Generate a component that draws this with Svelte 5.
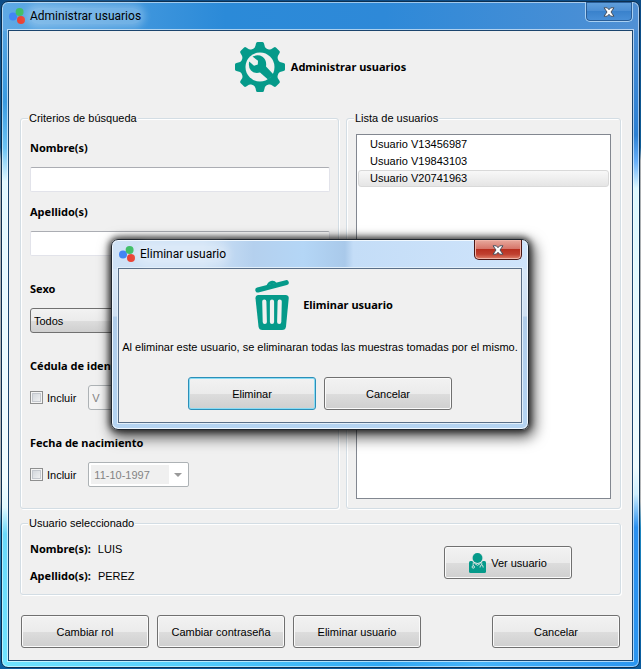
<script>
  const users = ['Usuario V13456987', 'Usuario V19843103', 'Usuario V20741963'];
  let selected = $state(2);
  let nombre = $state('');
  let apellido = $state('');
</script>

{#snippet logo()}
  <svg class="logo" viewBox="0 0 16 16" aria-hidden="true">
    <circle cx="4" cy="8.6" r="4" fill="#4285f4" />
    <circle cx="10.6" cy="4" r="4" fill="#41bf68" />
    <circle cx="12" cy="12" r="4" fill="#ea4335" />
  </svg>
{/snippet}

{#snippet cross()}
  <svg class="cross" viewBox="0 0 12 10" aria-hidden="true">
    <path d="M1 .8h3.3L6 2.7 7.700 .8H11L8 5l3 4.200H7.700L6 7.300 4.300 9.200H1L4 5z" fill="#fff" stroke="#46505f" stroke-width="1" stroke-linejoin="round" />
  </svg>
{/snippet}

<div class="desktop">
  <main class="window">
    <header class="titlebar">
      {@render logo()}
      <span class="caption">Administrar usuarios</span>
      <button class="close" aria-label="Cerrar">{@render cross()}</button>
    </header>

    <div class="client">
      <div class="heading">
        <svg width="50" height="50" viewBox="0 0 50 50" aria-hidden="true">
          <g fill="#059a8a">
            <circle cx="25" cy="25" r="19.500" />
            {#each [0, 45, 90, 135, 180, 225, 270, 315] as angle}
              <path d="M18 7.500Q20.600 5.500 21 1.500Q21.200 0 22.500 0H27.500Q28.800 0 29 1.500Q29.400 5.500 32 7.500z" transform="rotate({angle} 25 25)" />
            {/each}
          </g>
          <circle cx="25" cy="25" r="14.500" fill="#f0f0f0" />
          <path d="M17.500 14.600Q23 12 27.500 14.800Q32 18 31 24.500L38.500 32.500L33 37.500L25 30.500Q19.500 32 16 28.500Q13 25 14.200 19.500L19 23.800L22.800 22.600L23 18.800z" fill="#059a8a" />
        </svg>
        <h1>Administrar usuarios</h1>
      </div>

      <div class="columns">
        <fieldset class="criteria">
          <legend>Criterios de búsqueda</legend>
          <div class="field near">
            <label class="name" for="nombre">Nombre(s)</label>
            <input id="nombre" class="text" type="text" bind:value={nombre} />
          </div>
          <div class="field">
            <label class="name" for="apellido">Apellido(s)</label>
            <input id="apellido" class="text" type="text" bind:value={apellido} />
          </div>
          <div class="field">
            <label class="name" for="sexo">Sexo</label>
            <select id="sexo" class="combo">
              <option>Todos</option>
              <option>Femenino</option>
              <option>Masculino</option>
            </select>
          </div>
          <div class="field">
            <span class="name">Cédula de identidad</span>
            <div class="row">
              <label class="check"><input type="checkbox" />Incluir</label>
              <select class="kind" aria-label="Tipo de cédula" disabled>
                <option>V</option>
                <option>E</option>
              </select>
            </div>
          </div>
          <div class="field">
            <span class="name">Fecha de nacimiento</span>
            <div class="row">
              <label class="check"><input type="checkbox" />Incluir</label>
              <div class="date">
                <input type="text" value="11-10-1997" aria-label="Fecha de nacimiento" disabled />
                <button aria-label="Abrir calendario" disabled>
                  <svg width="8" height="4" viewBox="0 0 8 4"><path d="M0 0h8L4 4z" fill="#9a9a9a" /></svg>
                </button>
              </div>
            </div>
          </div>
        </fieldset>

        <fieldset class="users">
          <legend>Lista de usuarios</legend>
          <div class="list" role="listbox" aria-label="Lista de usuarios">
            {#each users as user, i}
              <button class="item" class:selected={i === selected} role="option" aria-selected={i === selected} onclick={() => (selected = i)}>{user}</button>
            {/each}
          </div>
        </fieldset>
      </div>

      <fieldset class="current">
        <legend>Usuario seleccionado</legend>
        <dl>
          <div><dt>Nombre(s):</dt><dd>LUIS</dd></div>
          <div><dt>Apellido(s):</dt><dd>PEREZ</dd></div>
        </dl>
        <button class="push">
          <svg width="17" height="20" viewBox="0 0 17 20" aria-hidden="true">
            <path d="M1.500 8H15.500Q17 8 17 9.500V18.500Q17 20 15.500 20H1.500Q0 20 0 18.500V9.500Q0 8 1.500 8z" fill="#059a8a" />
            <circle cx="8.500" cy="5.200" r="5.900" fill="#e6e6e6" />
            <circle cx="8.500" cy="5" r="4.900" fill="#059a8a" />
            <path d="M4.300 9.500Q4 12 4.300 13M12.700 9.500Q13 11 12.600 12M11 14.500Q11 12 12.600 12T14.200 14.500M5.500 10.500l3 1.800 3-1.800" fill="none" stroke="#e6e6e6" stroke-width="0.900" />
            <circle cx="4.300" cy="14" r="1.200" fill="none" stroke="#e6e6e6" stroke-width="0.900" />
          </svg>
          Ver usuario
        </button>
      </fieldset>

      <footer>
        <button class="push">Cambiar rol</button>
        <button class="push">Cambiar contraseña</button>
        <button class="push">Eliminar usuario</button>
        <button class="push last">Cancelar</button>
      </footer>
    </div>
  </main>

  <div class="dialog" role="dialog" aria-modal="true" aria-labelledby="dialog-title">
    <header class="titlebar">
      {@render logo()}
      <span class="caption">Eliminar usuario</span>
      <button class="close red" aria-label="Cerrar">{@render cross()}</button>
    </header>
    <div class="body">
      <div class="heading wide">
        <svg width="34" height="50" viewBox="0 0 34 50" aria-hidden="true">
          <g fill="#059a8a">
            <path d="M2.800 10L31.300 2.600" stroke="#059a8a" stroke-width="5" stroke-linecap="round" />
            <path d="M11.500 5.500Q13 1.500 17 .8Q20 .5 21.500 3z" />
            <path d="M3.500 15H30.500Q34 15 33.700 18.500L31 46.500Q30.600 50 27 50H7.500Q4 50 3.500 46.500L.5 18.500Q.3 15 3.500 15z" />
          </g>
          <path d="M9.300 21.500L9.800 42M17 21.500V42M24.700 21.500L24.200 42" stroke="#f0f0f0" stroke-width="4.200" stroke-linecap="round" />
        </svg>
        <h2 id="dialog-title">Eliminar usuario</h2>
      </div>
      <p>Al eliminar este usuario, se eliminaran todas las muestras tomadas por el mismo.</p>
      <div class="actions">
        <button class="push default">Eliminar</button>
        <button class="push">Cancelar</button>
      </div>
    </div>
  </div>
</div>

<style>
  :global(body) {
    margin: 0;
  }

  .desktop,
  .desktop :is(button, input, select) {
    box-sizing: border-box;
    font-family: 'Liberation Sans', Arial, sans-serif;
    font-size: 11px;
    line-height: 16px;
    color: #000;
  }

  .desktop {
    position: relative;
    display: flex;
    min-height: 100vh;
    padding: 1px;
    background: linear-gradient(#0d4c86, #0f5c96 22%, #a9adb0 24%, #b4b7b9 75%, #1d86c0 79%, #0a5a9c);
  }

  .window {
    flex: 1;
    display: flex;
    flex-direction: column;
    min-width: 0;
    padding: 0 6px 6px;
    border: 1px solid #0c2f50;
    border-radius: 7px;
    box-shadow: inset 0 0 0 1px #fff8;
    background:
      linear-gradient(90deg, #5fa9e4, #2b8ad8 35%, #2e89d8 60%, #5090d4) top / 100% 29px no-repeat,
      linear-gradient(90deg, #70e4ff, #52cdfc 30%, #30a8f4 60%, #45b4fa 75%, #2a95f0) bottom / 100% 7px no-repeat,
      linear-gradient(#5fa9e4, #3a9be0 15%, #6cc4f4 22%, #e2f8ff 27%, #f0fcff 72%, #dff8ff 76%, #6ad9fa 80%, #70e4ff) left / 50% 100% no-repeat,
      linear-gradient(#5090d4, #2b80d4 20%, #68b0fa 24%, #dcf8ff 28%, #eefbff 70%, #cdeeff 74%, #2a90f0 79%, #2a95f0) right / 50% 100% no-repeat;
  }

  .titlebar {
    display: flex;
    align-items: center;
    height: 28px;
    padding-left: 1px;
  }

  .logo {
    width: 16px;
    height: 16px;
  }

  .caption {
    margin-left: 5px;
    border-radius: 8px;
    font-family: Roboto, 'Liberation Sans', sans-serif;
    font-size: 12px;
    background: #ffffff40;
    box-shadow: 0 0 7px 4px #ffffff40;
  }

  .close {
    display: grid;
    place-items: center;
    align-self: flex-start;
    width: 48px;
    height: 20px;
    margin-left: auto;
    padding: 0;
    border: 1px solid #a9d0f2;
    border-top: 0;
    border-radius: 0 0 5px 5px;
    background: linear-gradient(#62a0dc, #4c8fd4 45%, #3a82cc 50%, #4a90d8);
    box-shadow: inset 0 0 0 1px #2a5d96;
  }

  .close.red {
    border-color: #4a1614;
    background: linear-gradient(#e8aa9e, #d6766a 45%, #b83020 50%, #c04030 75%, #e0806a);
    box-shadow: inset 0 0 0 1px #f0b4a8;
  }

  .cross {
    width: 12px;
    height: 10px;
  }

  .client {
    flex: 1;
    padding: 11px 11px 12px;
    border: 1px solid #1b456e;
    box-shadow: 0 0 0 1px #fff9;
    background: #f0f0f0;
  }

  .heading {
    display: flex;
    align-items: center;
    justify-content: center;
    gap: 6px;
  }

  .heading.wide {
    gap: 14px;
    padding-left: 8px;
  }

  h1,
  h2 {
    margin: 0;
    font-size: 11px;
  }

  .columns {
    display: grid;
    grid-template-columns: 319fr 275fr;
    gap: 7px;
    margin-top: 19px;
  }

  fieldset {
    min-width: 0;
    margin: 0;
    padding: 9px;
    border: 1px solid #d3dde4;
    border-radius: 3px;
    box-shadow: inset 1px 1px #fff, 1px 1px #fff;
  }

  legend {
    margin-left: -2px;
    padding: 0 1px;
    line-height: 14px;
    background: #f0f0f0;
  }

  .criteria {
    padding: 15px 8px 21px 9px;
  }

  .field {
    display: flex;
    flex-direction: column;
    align-items: flex-start;
    gap: 11px;
    margin-bottom: 25px;
  }

  .field.near {
    margin-bottom: 12px;
  }

  .field:last-child {
    margin-bottom: 0;
  }

  .name,
  dt,
  h1,
  h2 {
    font-family: 'Noto Sans', 'Open Sans', sans-serif;
    font-weight: 700;
  }

  .text {
    width: 100%;
    height: 25px;
    padding: 0 4px;
    border: 1px solid #e2e3ea;
    border-top-color: #abadb3;
    border-radius: 2px;
    background: #fff;
  }

  .combo,
  .kind {
    appearance: none;
    width: 160px;
    height: 25px;
    padding: 0 3px;
    border: 1px solid #707070;
    border-radius: 3px;
    background: linear-gradient(#f2f2f2, #ebebeb 50%, #dddddd 50%, #cfcfcf);
  }

  .desktop .kind {
    width: 60px;
    border-color: #adb2b5;
    color: #838383;
    background: #f4f4f4;
    opacity: 1;
  }

  .row,
  .check {
    display: flex;
    align-items: center;
  }

  .row {
    gap: 12px;
  }

  .check {
    gap: 4px;
  }

  .check input {
    appearance: none;
    width: 13px;
    height: 13px;
    margin: 0;
    border: 1px solid #8e8f8f;
    background: linear-gradient(135deg, #cdd2d8, #f6f6f6);
    box-shadow: inset 0 0 0 1px #f4f4f4, inset 0 0 0 2px #c4c8ce;
  }

  .date {
    display: flex;
    width: 101px;
    height: 25px;
    box-sizing: border-box;
    padding: 2px;
    border: 1px solid #adb2b5;
    border-radius: 2px;
    background: #fff;
  }

  .desktop .date input {
    flex: 1;
    min-width: 0;
    padding: 0 3px;
    border: 0;
    color: #838383;
    background: #f0f0f0;
  }

  .date button {
    display: grid;
    place-items: center;
    width: 17px;
    padding: 0;
    border: 0;
    background: none;
  }

  .users {
    display: flex;
  }

  .list {
    flex: 1;
    display: flex;
    flex-direction: column;
    padding: 1px;
    border: 1px solid #828790;
    background: #fff;
  }

  .desktop .item {
    height: 17px;
    padding: 0 11px;
    border: 1px solid transparent;
    border-radius: 3px;
    background: none;
    text-align: left;
    line-height: 15px;
  }

  .desktop .item.selected {
    border-color: #d9d9d9;
    background: linear-gradient(#f8f8f8, #e5e5e5);
  }

  .current {
    display: flex;
    align-items: center;
    justify-content: space-between;
    margin-top: 7px;
    padding: 11px 48px 10px 9px;
  }

  dl {
    display: flex;
    flex-direction: column;
    gap: 11px;
    margin: 0;
  }

  dl div {
    display: flex;
    align-items: baseline;
    gap: 7px;
  }

  dd {
    margin: 0;
  }

  .push {
    display: flex;
    align-items: center;
    justify-content: center;
    gap: 5px;
    width: 128px;
    height: 33px;
    padding: 0;
    border: 1px solid #707070;
    border-radius: 3px;
    background: linear-gradient(#f2f2f2, #ebebeb 50%, #dddddd 50%, #cfcfcf);
    box-shadow: inset 0 0 0 1px #fafafa;
  }

  .push.default {
    border-color: #2c8fb8;
    box-shadow: inset 0 0 0 1px #8adcf4;
  }

  footer {
    display: flex;
    gap: 8px;
    margin-top: 20px;
    padding: 0 1px;
  }

  .last {
    margin-left: auto;
  }

  .dialog {
    position: absolute;
    left: 111px;
    top: 239px;
    box-sizing: border-box;
    width: 418px;
    padding: 0 6px 6px;
    border: 1px solid #20262e;
    border-radius: 7px;
    background:
      linear-gradient(90deg, #cfe2f6, #cfe2f6 22%, #b4d0ee 34%, #b4d6f6 46%, #a9c9ea 56%, #c4ddf7 58%, #cfe4fb) top / 100% 29px no-repeat,
      linear-gradient(#dcebfa, #cfe0f2 40%, #b0cdea 41%, #b5d4f2);
    box-shadow: inset 0 0 0 1px #f0f8ff, 0 0 6px 2px #000a, 3px 5px 14px 3px #0009;
  }

  .body {
    padding: 11px 0 12px;
    border: 1px solid #5a6f88;
    box-shadow: 0 0 0 1px #e2effa;
    background: #f0f0f0;
  }

  p {
    margin: 9px 0 22px;
    text-align: center;
  }

  .actions {
    display: flex;
    justify-content: center;
    gap: 8px;
  }
</style>
